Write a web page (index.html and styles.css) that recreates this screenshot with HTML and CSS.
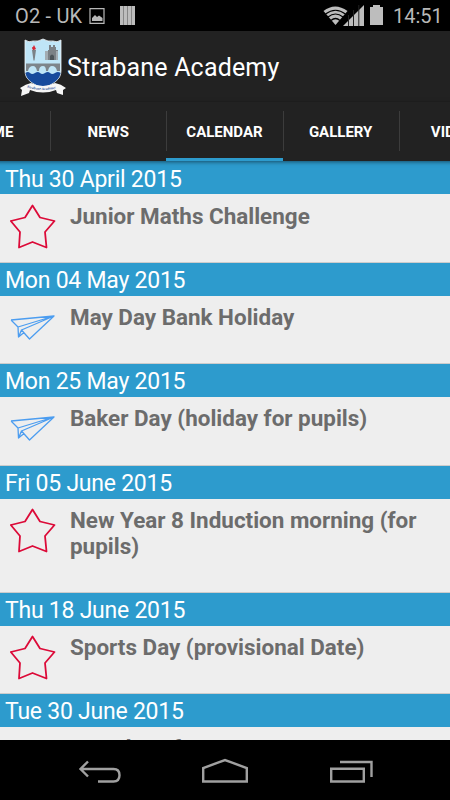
FILE: index.html
```
<!DOCTYPE html>
<html lang="en">
<head>
<meta charset="utf-8">
<title>Strabane Academy</title>
<link rel="stylesheet" href="styles.css">
</head>
<body>
<svg class="defs" width="0" height="0" aria-hidden="true">
  <symbol id="star" viewBox="0 0 46 45"><path d="M22.500 1.500 30 13.500 44.500 17 35 28 36.500 43.500 22.500 38 9 43.500 10 28 .8 17 15 13.500Z" fill="none" stroke="#dc0a38" stroke-width="1.800" stroke-linejoin="round"/></symbol>
  <symbol id="plane" viewBox="0 0 46 26"><path d="M1 5 44 1 19.500 24 11.500 15 44 1 8 12 1 5M8 12 8.500 22 14 17.500M8.500 22 11.500 15" fill="none" stroke="#4c9df0" stroke-width="1.300" stroke-linejoin="round"/></symbol>
</svg>
<div class="phone">
  <header class="status">
    <span class="carrier">O2 - UK</span>
    <svg class="notes" width="48" height="20" viewBox="0 0 48 20">
      <path d="M2 2.600H16V17.400H2Z" fill="none" stroke="#b8b8b8" stroke-width="1.200"/>
      <path d="M4 15V12L7 9 9 11 11 9.500 14.500 12V15Z" fill="#b8b8b8"/>
      <path d="M32 0H47V19H32Z" fill="#bdbdbd"/><path d="M35.500 0V19M39.500 0V19M43.500 0V19" stroke="#777" stroke-width=".8"/>
    </svg>
    <svg class="signals" width="62" height="22" viewBox="0 0 62 22">
      <path d="M.5 6Q12-3 24.500 6L12.500 20Z" fill="#bdbdbd"/>
      <path d="M2.500 9Q12.500 1.500 22.500 9M5 12Q12.500 6 20 12M8 15.500Q12.500 11.500 17 15.500" fill="none" stroke="#000" stroke-width="1.200"/>
      <path d="M20 21 41 0V21Z" fill="#bdbdbd"/><path d="M25.500 10V21M30.500 5V21M35.800 0V21" stroke="#222" stroke-width="1"/>
      <path d="M47 2H50V0H57V2H60V20H47Z" fill="#bdbdbd"/>
    </svg>
    <span class="clock">14:51</span>
  </header>
  <div class="appbar">
    <svg class="crest" width="48" height="60" viewBox="0 0 48 60">
      <path d="M6 2Q10 5 14 3Q19 4 24 1Q29 4 34 3Q38 5 42 2V33C42 42 34 46 24 50C14 46 6 42 6 33Z" fill="#bfe5f7" stroke="#f4f8fa" stroke-width=".8"/>
      <path d="M6.400 35Q9 33 11 35T16 35T21 35T26 35T31 35T36 35T41.600 35C40 43 33 46 24 49.500C15 46 8 43 6.400 35Z" fill="#174a9c"/>
      <path d="M7 25.500H41V33H38Q37 28 33 28Q30 28 29 33H27Q27 28 24 28Q20 28 20 33H18Q17 28 14 28Q10 28 9 33H7Z" fill="#7d858b"/>
      <path d="M26 13H29V12H30V7H32V9H34V7H36V9H37V12H39V13H38V22H26ZM13 12H17L15.500 22.500H14.500Z" fill="#7b8186"/>
      <path d="M26 13H29V22H26ZM37 13H39V22H37Z" fill="#a3acb2"/>
      <path d="M31 22V18Q33 15 35 18V22Z" fill="#4c5459"/>
      <path d="M14 12Q12 9 14 9L15 7 17 11 15 12Z" fill="#d72735"/>
      <path d="M1 50Q7 46 12 45Q24 51 36 45Q42 46 47 50L44 52V57L38 55 37 52Q24 57 11 52L10 55 2 58 3 52Z" fill="#f6f6f6"/>
      <path id="motto" d="M8 49.500Q24 54.500 40 49.500" fill="none"/>
      <text class="motto"><textPath href="#motto">Strabane Academy</textPath></text>
    </svg>
    <h1>Strabane Academy</h1>
  </div>
  <nav class="tabs">
    <a>HOME</a><a>NEWS</a><a class="active">CALENDAR</a><a>GALLERY</a><a>VIDEOS</a>
  </nav>
  <main>
    <h2>Thu 30 April 2015</h2>
    <div class="event"><svg class="star"><use href="#star"/></svg><p>Junior Maths Challenge</p></div>
    <h2>Mon 04 May 2015</h2>
    <div class="event"><svg class="plane"><use href="#plane"/></svg><p>May Day Bank Holiday</p></div>
    <h2>Mon 25 May 2015</h2>
    <div class="event"><svg class="plane"><use href="#plane"/></svg><p>Baker Day (holiday for pupils)</p></div>
    <h2>Fri 05 June 2015</h2>
    <div class="event tall"><svg class="star"><use href="#star"/></svg><p>New Year 8 Induction morning (for pupils)</p></div>
    <h2>Thu 18 June 2015</h2>
    <div class="event"><svg class="star"><use href="#star"/></svg><p>Sports Day (provisional Date)</p></div>
    <h2>Tue 30 June 2015</h2>
    <div class="event"><svg class="plane"></svg><p>Last day of term</p></div>
  </main>
  <footer class="navbar">
    <svg width="450" height="60" viewBox="0 0 450 60" fill="none" stroke="#a0a0a0" stroke-width="2.400">
      <path d="M88 21.500 80.500 29 88 36.500M81 29H113.500Q119.500 29 119.500 35.200T113.500 41.500H98"/>
      <path d="M203.200 41.500V28L225 20 246.800 28V41.500Z"/>
      <path d="M331.200 28.800H363.800V41.500H331.200ZM340 22H371.500V37"/>
    </svg>
  </footer>
</div>
</body>
</html>
```
FILE: styles.css
```
* { box-sizing: border-box; }
body { margin: 0; background: #000; font-family: Roboto, "Liberation Sans", sans-serif; }
.defs { position: absolute; }
h1, h2, p { margin: 0; font-weight: 400; white-space: nowrap; }
.phone { width: 450px; height: 800px; display: flex; flex-direction: column; overflow: hidden; }
.status { height: 31px; flex: none; display: flex; align-items: center; background: #000; color: #b8b8b8; padding: 0 9px 0 15px; font-size: 20px; }
.carrier { width: 73px; white-space: nowrap; letter-spacing: .2px; padding-top: 1px; }
.notes { margin-top: 1px; }
.signals { margin: 0 8px 0 auto; }
.clock { width: 48px; font-size: 20px; white-space: nowrap; padding-top: 1px; }
.appbar { height: 71px; flex: none; display: flex; background: #222; color: #fff; padding: 6px 0 0 19px; }
.crest { flex: none; margin-top: 1px; }
.motto { font: bold 3.6px "Liberation Serif", serif; fill: #35559b; }
h1 { font-size: 25px; line-height: 60px; padding-top: 1px; letter-spacing: .18px; }
.tabs { height: 59px; flex: none; display: flex; margin-left: -66px; width: 582px; background: #222; position: relative; z-index: 1; box-shadow: 0 1px 4px rgba(0,0,0,.5); }
.tabs a { width: 116.200px; flex: none; position: relative; padding-top: 1px; text-align: center; line-height: 59px; color: #fff; font-size: 15px; font-weight: 700; }
.tabs a + a::before { content: ""; position: absolute; left: 0; top: 9px; width: 1px; height: 40px; background: #3c3c3c; }
.tabs .active { border-bottom: 3px solid #2d9bcd; }
main { flex: 1; min-height: 0; overflow: hidden; background: #eee; }
h2 { height: 33px; background: #2d9bcd; color: #fff; font-size: 23px; line-height: 35px; padding-left: 5px; letter-spacing: -.24px; }
h2:first-child { line-height: 37px; }
.event { height: 68.350px; display: flex; align-items: flex-start; padding: 9px 0 0 10px; border-bottom: 1px solid #ccc; }
h2:first-child + .event { height: 69px; }
h2:first-child + .event p { margin-top: 0; }
.event svg { width: 46px; flex: none; margin-right: 14px; }
.event .star { height: 45px; margin-top: .5px; }
.event .plane { height: 26px; margin-top: 10px; }
.event p { width: 365px; margin-top: -1px; white-space: normal; color: #6c6c6c; font-size: 22.450px; font-weight: 700; line-height: 26.500px; }
.event.tall { height: 94.300px; }
.navbar { height: 60px; flex: none; background: #000; }
.navbar svg { display: block; }
```
